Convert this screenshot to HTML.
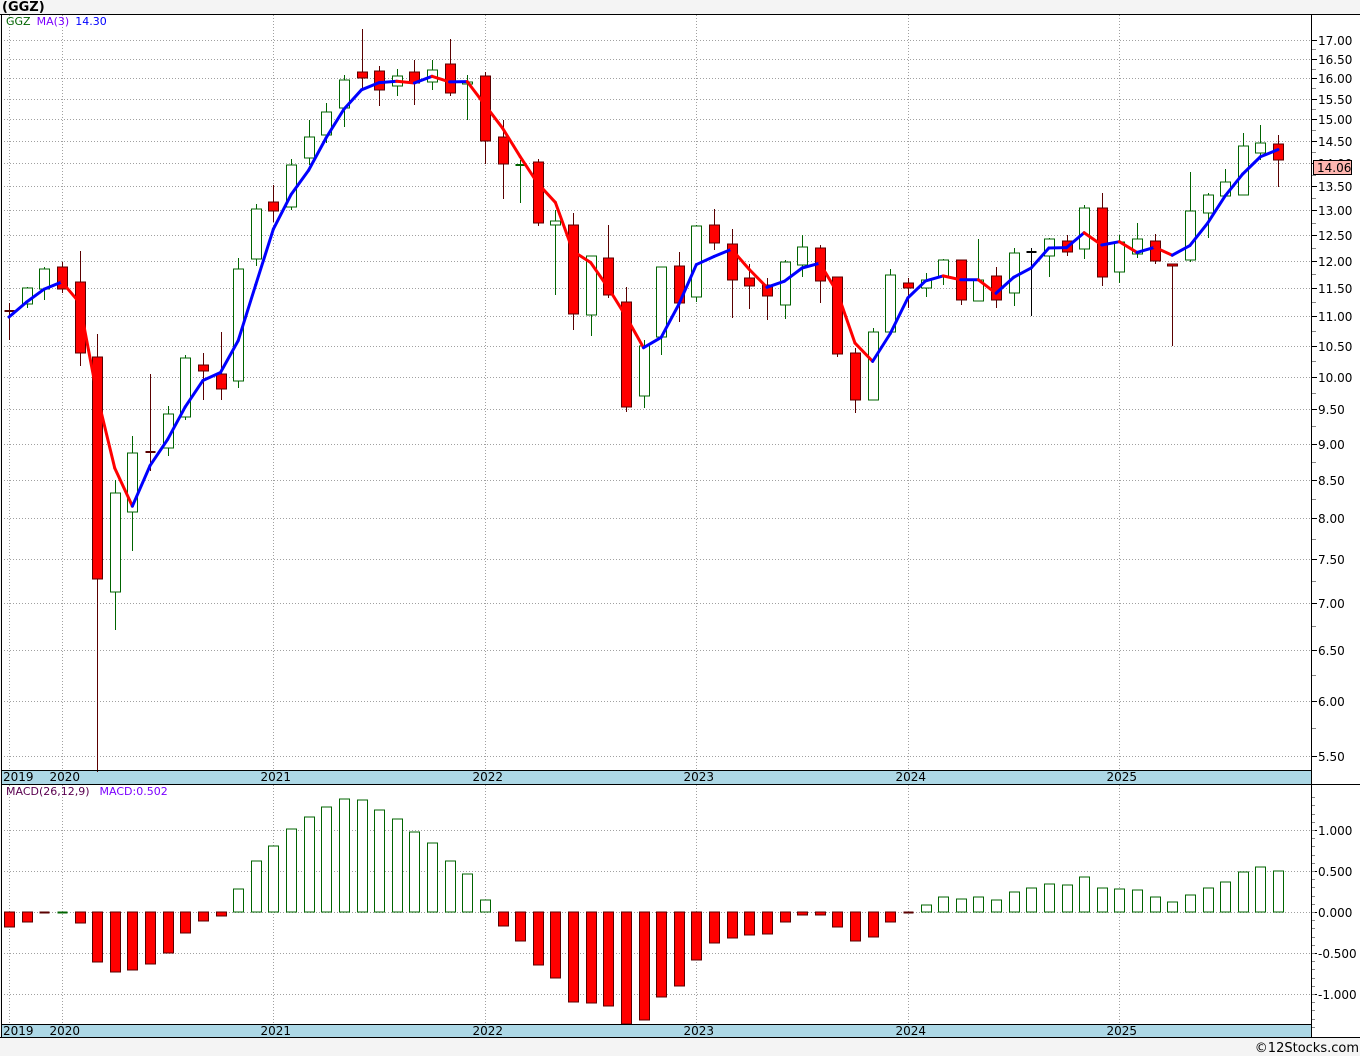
<!DOCTYPE html>
<html><head><meta charset="utf-8"><style>
html,body{margin:0;padding:0;background:#f4f4f4;}
svg{display:block;font-family:"DejaVu Sans","Liberation Sans",sans-serif;}
</style></head><body>
<svg id="s" width="1360" height="1056" xmlns="http://www.w3.org/2000/svg"></svg>
<script>
var W=[];
function a(t){W.push(t);}
var L17=Math.log(17),K=634.8;
function py(p){return 40+(L17-Math.log(p))*K;}
function yp(y){return Math.exp(L17-(y-40)/K);}
function cx(i){return 9+17.625*i;}
var C=[
[311,311,303,340,'d'],[288,304,287,308,'g'],[269,289,267,300,'g'],[267,289,262,293,'r'],[282,353,251,366,'r'],
[357,579,334,772,'r'],[493,592,480,630,'g'],[453,512,436,551,'g'],[452,452,374,471,'d'],[414,448,406,456,'g'],
[358,417,355,420,'g'],[365,371,353,400,'r'],[374,389,332,400,'r'],[269,381,258,388,'g'],[209,259,204,266,'g'],
[202,211,185,222,'r'],[165,207,159,210,'g'],[137,158,120,165,'g'],[112,135,103,143,'g'],[80,108,75,127,'g'],
[72,78,29,88,'r'],[71,90,66,106,'r'],[76,86,69,96,'g'],[72,83,60,105,'r'],[70,82,60,90,'g'],
[64,93,39,96,'r'],[82,84,75,120,'g'],[76,141,72,164,'r'],[137,164,120,199,'r'],[165,165,160,203,'gd'],
[162,223,159,226,'r'],[221,225,210,295,'g'],[225,314,213,330,'r'],[256,315,256,336,'g'],[258,295,225,298,'r'],
[302,407,287,412,'r'],[346,396,340,408,'g'],[267,337,267,355,'g'],[266,303,252,322,'r'],[226,297,225,302,'g'],
[225,243,209,250,'r'],[244,280,229,318,'r'],[278,286,264,309,'r'],[285,296,278,320,'r'],[262,305,260,319,'g'],
[247,265,235,277,'g'],[248,281,245,303,'r'],[277,354,277,357,'r'],[353,400,348,413,'r'],[332,400,328,400,'g'],
[275,332,269,332,'g'],[283,288,278,308,'r'],[280,288,273,297,'g'],[260,276,259,285,'g'],[260,300,260,305,'r'],
[280,301,239,301,'g'],[276,300,267,308,'r'],[253,293,248,306,'g'],[252,252,248,316,'k'],[239,256,238,277,'g'],
[241,252,235,256,'r'],[208,249,205,259,'g'],[208,277,193,286,'r'],[242,272,235,283,'g'],[239,254,223,258,'g'],
[241,261,234,264,'r'],[264,266,264,346,'r'],[211,260,172,262,'g'],[195,213,193,238,'g'],[182,196,169,196,'g'],
[146,195,133,195,'g'],[143,153,125,160,'g'],[144,160,135,187,'r']
];
var M=[927,922,913,912,923,962,972,970,964,953,933,921,916,889,861,846,829,817,807,799,800,810,819,832,843,861,874,900,926,941,965,978,1002,1003,1006,1024,1020,997,986,960,943,938,935,934,922,915,915,927,941,937,922,913,905,897,899,897,900,892,888,884,885,877,888,889,890,897,902,895,888,882,872,867,871];
a('<rect x="0" y="0" width="1360" height="1056" fill="#f4f4f4"/>');
a('<rect x="1" y="14" width="1359" height="1024" fill="#fff"/>');
a('<rect x="1" y="770" width="1310" height="14" fill="#add8e6"/>');
a('<rect x="1" y="1024" width="1310" height="14" fill="#add8e6"/>');
var G='stroke="#a0a0a0" stroke-width="1" stroke-dasharray="1,2"';
var yrs=[[0,'2019'],[3,'2020'],[15,'2021'],[27,'2022'],[39,'2023'],[51,'2024'],[63,'2025']];
for(var p=5.5;p<=17.001;p+=0.5){var y=Math.round(py(p))+0.5;a('<line x1="1" x2="1311" y1="'+y+'" y2="'+y+'" '+G+'/>');
 a('<line x1="1311" x2="1317" y1="'+y+'" y2="'+y+'" stroke="#000"/>');
 a('<text x="1318" y="'+(y+4.5)+'" font-size="12" fill="#000">'+p.toFixed(2)+'</text>');
 var ym=Math.round(py(p+0.25))+0.5; if(p<17) a('<line x1="1311" x2="1316" y1="'+ym+'" y2="'+ym+'" stroke="#888"/>');}
yrs.forEach(function(v){var x=Math.round(cx(v[0]))+0.5;
 a('<line x1="'+x+'" x2="'+x+'" y1="15" y2="770" '+G+'/>');
 a('<line x1="'+x+'" x2="'+x+'" y1="785" y2="1024" '+G+'/>');
 var tx=v[0]==0?3:x-13;
 a('<text x="'+tx+'" y="781" font-size="12" fill="#000">'+v[1]+'</text>');
 a('<text x="'+tx+'" y="1035" font-size="12" fill="#000">'+v[1]+'</text>');});
[[1,'1.000'],[0.5,'0.500'],[0,'0.000'],[-0.5,'-0.500'],[-1,'-1.000']].forEach(function(v){var y=Math.round(912-v[0]*82)+0.5;
 a('<line x1="1" x2="1311" y1="'+y+'" y2="'+y+'" '+G+'/>');
 a('<line x1="1311" x2="1317" y1="'+y+'" y2="'+y+'" stroke="#000"/>');
 a('<text x="1318" y="'+(y+4.5)+'" font-size="12" fill="#000">'+v[1]+'</text>');});
for(var v=-1.4;v<=1.45;v+=0.1){var y=Math.round(912-v*82)+0.5;if(y>786&&y<1037)a('<line x1="1311" x2="1315" y1="'+y+'" y2="'+y+'" stroke="#888"/>');}
C.forEach(function(c,i){var x=Math.round(cx(i))+0.5,t=c[4];
 var dk=(t=='g'||t=='gd')?'#006400':(t=='k'?'#000':'#5a0000');
 a('<line x1="'+x+'" x2="'+x+'" y1="'+c[2]+'" y2="'+c[3]+'" stroke="'+dk+'" stroke-width="1"/>');
 if(t=='d'||t=='k'||t=='gd'){a('<line x1="'+(x-5)+'" x2="'+(x+5)+'" y1="'+c[0]+'" y2="'+c[0]+'" stroke="'+dk+'" stroke-width="2"/>');}
 else{var h=Math.max(c[1]-c[0],2);a('<rect x="'+(x-5)+'" y="'+c[0]+'" width="10" height="'+h+'" fill="'+(t=='g'?'#fff':'#f00')+'" stroke="'+dk+'" stroke-width="1"/>');}});
var cl=C.map(function(c){var t=c[4];return yp(t=='r'?c[1]:c[0]);});
var ma=[];for(var i=0;i<C.length;i++){if(i<2){ma.push(i==0?317:302);continue;}ma.push(py((cl[i]+cl[i-1]+cl[i-2])/3));}
for(var i=1;i<ma.length;i++){var col=ma[i]<=ma[i-1]?'#0000ff':'#ff0000';
 a('<line x1="'+cx(i-1)+'" y1="'+ma[i-1]+'" x2="'+cx(i)+'" y2="'+ma[i]+'" stroke="'+col+'" stroke-width="3" stroke-linecap="round"/>');}
M.forEach(function(m,i){var x=Math.round(cx(i))+0.5;
 if(Math.abs(m-912)<2){a('<line x1="'+(x-5)+'" x2="'+(x+5)+'" y1="912.5" y2="912.5" stroke="'+(i==3?'#006400':'#5a0000')+'" stroke-width="2"/>');return;}
 if(m<912)a('<rect x="'+(x-5)+'" y="'+m+'" width="10" height="'+(912-m)+'" fill="#fff" stroke="#006400"/>');
 else a('<rect x="'+(x-5)+'" y="912" width="10" height="'+(m-912)+'" fill="#f00" stroke="#5a0000"/>');});
a('<rect x="1313.5" y="160.5" width="38" height="14" fill="#ffb6b0" stroke="#000"/>');
a('<text x="1317" y="172" font-size="12" fill="#000">14.06</text>');
a('<line x1="0" x2="1360" y1="14.5" y2="14.5" stroke="#000"/>');
a('<line x1="1.5" x2="1.5" y1="14" y2="1038" stroke="#000"/>');
a('<line x1="1311.5" x2="1311.5" y1="14" y2="1038" stroke="#000"/>');
a('<line x1="1" x2="1311" y1="770.5" y2="770.5" stroke="#000"/>');
a('<line x1="1" x2="1360" y1="784.5" y2="784.5" stroke="#000"/>');
a('<line x1="1" x2="1311" y1="1024.5" y2="1024.5" stroke="#000"/>');
a('<line x1="0" x2="1360" y1="1037.5" y2="1037.5" stroke="#000"/>');
a('<rect x="0" y="1038" width="1360" height="18" fill="#f4f4f4"/>');
a('<text x="2" y="11" font-size="13" font-weight="bold" fill="#000">(GGZ)</text>');
a('<text x="6" y="25" font-size="11"><tspan fill="#006400">GGZ</tspan><tspan fill="#7b00ff" dx="6">MA(3)</tspan><tspan fill="#0000ff" dx="6">14.30</tspan></text>');
a('<text x="6" y="795" font-size="11"><tspan fill="#5a0050">MACD(26,12,9)</tspan><tspan fill="#7b00ff" dx="10">MACD:0.502</tspan></text>');
a('<text x="1359" y="1052" font-size="13" fill="#000" text-anchor="end">©12Stocks.com</text>');
document.getElementById('s').innerHTML=W.join('');
</script>
</body></html>
